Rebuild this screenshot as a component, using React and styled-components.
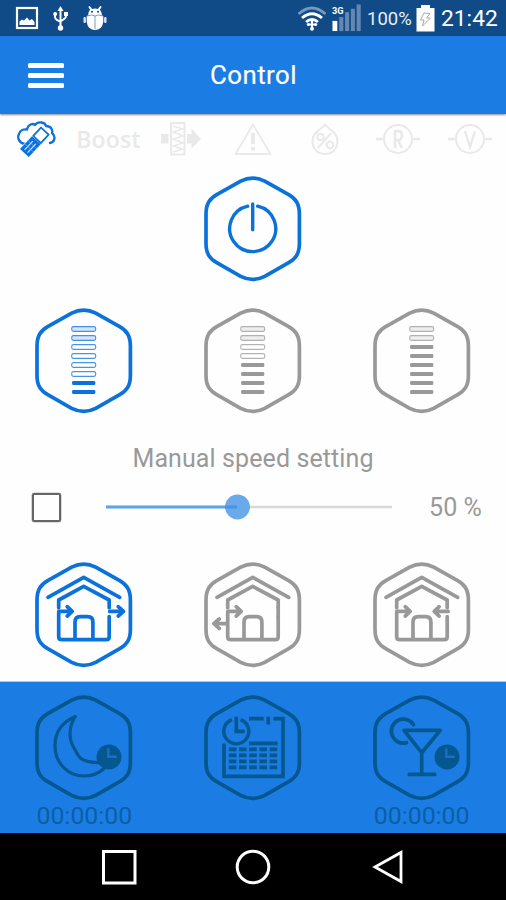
import React from 'react';
import styled, { createGlobalStyle } from 'styled-components';

const BLUE = '#0b72dc';
const GREY = '#999999';
const NAVY = '#04578f';
const PALE = '#e9e9e9';

const GlobalStyle = createGlobalStyle`
  * { box-sizing: border-box; }
  body { margin: 0; background: #fff; font-family: Roboto, "Liberation Sans", sans-serif; }
`;

const Screen = styled.div`
  width: 506px;
  height: 900px;
  display: flex;
  flex-direction: column;
  overflow: hidden;
  background: #fefefe;
`;

const StatusBar = styled.header`
  flex: none;
  height: 36px;
  padding: 0 9px 0 15px;
  display: flex;
  align-items: center;
  justify-content: space-between;
  background: #104b88;
  color: #fff;
`;

const StatusGroup = styled.div`
  display: flex;
  align-items: center;
  gap: ${(p) => p.$gap}px;
`;

const Percent = styled.span`
  width: 43px;
  font-size: 18.5px;
  line-height: 36px;
  padding-top: 2px;
  color: #e8eef6;
`;

const Clock = styled.span`
  width: 56px;
  font-size: 22.8px;
  line-height: 36px;
  padding-top: 2px;
  white-space: nowrap;
`;

const AppBar = styled.div`
  flex: none;
  height: 78px;
  display: grid;
  grid-template-columns: 1fr auto 1fr;
  align-items: center;
  background: #1b7de3;
  color: #fff;
  box-shadow: 0 1px 2px rgba(0, 0, 0, 0.45);
`;

const MenuButton = styled.button`
  width: 36px;
  margin: 0 0 0 28px;
  padding: 0;
  border: 0;
  background: none;
  display: flex;
  flex-direction: column;
  gap: 5px;
`;

const MenuLine = styled.span`
  height: 5px;
  border-radius: 1.5px;
  background: #fff;
`;

const Title = styled.h1`
  margin: 0;
  padding-left: 1px;
  font-size: 25.8px;
  font-weight: 400;
  letter-spacing: 0.45px;
  -webkit-text-stroke: 0.2px #fff;
`;

const Indicators = styled.div`
  flex: none;
  height: 50px;
  display: grid;
  grid-template-columns: repeat(7, 1fr);
  align-items: center;
  justify-items: center;
`;

const Boost = styled.span`
  font: 600 23px/30px "Open Sans", "Noto Sans", sans-serif;
  letter-spacing: 0.2px;
  color: ${PALE};
`;

const PowerRow = styled.div`
  flex: none;
  height: 132px;
  padding-top: 12px;
  display: flex;
  justify-content: center;
`;

const ButtonRow = styled.div`
  flex: none;
  height: ${(p) => p.$height}px;
  padding-top: ${(p) => p.$top}px;
  display: grid;
  grid-template-columns: repeat(3, 1fr);
  justify-items: center;
  align-items: start;
`;

const HexCell = styled.div`
  display: flex;
  flex-direction: column;
  align-items: center;
`;

const HexSvg = styled.svg`
  display: block;
  fill: none;
  stroke: ${(p) => p.$color};
  stroke-width: 3.7;
  stroke-linecap: round;
  stroke-linejoin: round;
`;

const SpeedSection = styled.section`
  flex: none;
  height: 122px;
  display: flex;
  flex-direction: column;
  color: ${GREY};
`;

const SpeedTitle = styled.h2`
  margin: 15px 0 0;
  font-size: 25px;
  line-height: 32px;
  font-weight: 400;
  letter-spacing: 0.1px;
  text-align: center;
`;

const SpeedRow = styled.div`
  height: 64px;
  padding: 0 24px 0 32px;
  display: flex;
  align-items: center;
`;

const Checkbox = styled.span`
  width: 29px;
  height: 29px;
  border: 2px solid #666;
  border-radius: 2px;
  box-shadow: 0 0 0.5px 0.3px #777;
`;

const SliderSvg = styled.svg`
  margin-left: 45px;
`;

const SpeedValue = styled.span`
  margin-left: auto;
  padding-top: 2px;
  font-size: 25px;
  line-height: 32px;
  letter-spacing: 0.1px;
`;

const TimerPanel = styled.section`
  flex: none;
  height: 152px;
  border-top: 1px solid #a9c9f3;
  background: #1b7de3;
`;

const TimerText = styled.span`
  font-size: 24.8px;
  line-height: 30px;
  color: #0a5fa6;
`;

const NavBar = styled.nav`
  flex: 1;
  display: flex;
  align-items: center;
  justify-content: center;
  gap: 98px;
  background: #000;
`;

const HEX =
  'M-46.7-14.5C-46.7-25-43-30-36-34L-12-47.6C-4.5-51.4 4.5-51.4 12-47.6L36-34C43-30 46.7-25 46.7-14.5V14.5C46.7 25 43 30 36 34L12 47.6C4.5 51.4-4.5 51.4-12 47.6L-36 34C-43 30-46.7 25-46.7 14.5Z';

function Hex({ color, children }) {
  return (
    <HexSvg width="100" height="106" viewBox="-49.7 -52.7 100 106" $color={color}>
      <path d={HEX} />
      {children}
    </HexSvg>
  );
}

function SpeedHex({ color, filled, tint }) {
  return (
    <Hex color={color}>
      {Array.from({ length: 8 }, (_, i) => {
        const y = -31.7 + i * 9;
        return i >= 8 - filled ? (
          <rect key={i} x="-11.6" y={y - 2} width="23.2" height="4" rx="1.3" fill={color} stroke="none" />
        ) : (
          <rect key={i} x="-12" y={y - 2.4} width="24" height="4.8" rx="1.8" fill={i < 2 ? tint : '#fff'} strokeWidth="1.1" strokeOpacity=".75" />
        );
      })}
    </Hex>
  );
}

function HouseHex({ color, variant }) {
  return (
    <Hex color={color}>
      <path d="M-35.7-17.3L0-37.3L36-17.3" />
      <path d="M-25-7V-14.7L0-28.3L25.5-14.7V-7M-25-2V22Q-25 25 -22 25H22.5Q25.5 25 25.5 22V2" />
      <path d="M-8.7 24V7.5Q-8.7 2 -3.5 2H4Q9.2 2 9.2 7.5V24" />
      <path d="M-25-3.3H-12M-16.5-8L-11.5-3.3L-16.5 1.4" />
      {variant === 'through' && <path d="M26-3.3H39M34.5-8L39.8-3.3L34.5 1.4" />}
      {variant === 'left' && <path d="M25.5-7V2M-26 9H-38M-33.5 4.3L-38.8 9L-33.5 13.7" />}
      {variant === 'in' && <path d="M26.5-3.3H13M17.5-8L12.5-3.3L17.5 1.4" />}
    </Hex>
  );
}

function MiniClock() {
  return (
    <g>
      <circle cx="25.3" cy="9.3" r="12.5" fill={NAVY} stroke="none" />
      <path d="M24.6 0.5V9H33" stroke="#1a70c4" strokeWidth="2.4" strokeLinecap="butt" strokeLinejoin="miter" />
    </g>
  );
}

function CalendarHex() {
  return (
    <Hex color={NAVY}>
      <g strokeLinecap="butt" strokeLinejoin="miter">
        <path d="M-12.1-28.1A12.5 12.5 0 1 1-20.7-28.1" strokeWidth="3.4" />
        <path d="M-16.4-31V-16.3H-8" />
        <path d="M-3.7-29H11M15.6-31V-23.2M20.6-29H30.3V28.7H-28.7V-4.3M-3.7-4.3H24.8" />
        {[1.7, 7.7, 13.7, 19.7].map((y) => (
          <path key={y} d={`M-23.9 ${y}H25`} strokeWidth="3.7" strokeDasharray="7.6 2.6" />
        ))}
      </g>
    </Hex>
  );
}

const CircleLetter = ({ children }) => (
  <svg width="46" height="34" viewBox="-23 -17 46 34" fill="none" stroke={PALE} strokeWidth="2">
    <circle r="14" />
    <path d="M-22 0H-14M14 0H22" strokeWidth="2.6" />
    {children}
  </svg>
);

function StatusIcons() {
  return (
    <StatusGroup $gap={14}>
      <svg width="24" height="24" viewBox="0 0 24 24">
        <rect x="2" y="2" width="20" height="20" fill="none" stroke="#fff" strokeWidth="2.2" />
        <path d="M4.5 19V15.5L7 13.5L9 14.5L12 11.5L14.5 14.5L17 13L19.5 16V19Z" fill="#fff" />
      </svg>
      <svg width="16" height="26" viewBox="0.5 0 16 26" fill="none" stroke="#fff" strokeWidth="2">
        <path d="M8 23V4M2.5 9V12Q2.5 14 4.5 15L8 17M13.5 9V11Q13.5 13 11.5 14L8 16.5" />
        <path d="M8 1L11 6H5Z" fill="#fff" stroke="none" />
        <circle cx="2.7" cy="9" r="2" fill="#fff" stroke="none" />
        <rect x="11.5" y="7" width="4" height="4" fill="#fff" stroke="none" />
        <circle cx="8" cy="23" r="2.7" fill="#fff" stroke="none" />
      </svg>
      <svg width="24" height="26" viewBox="0 0 24 26">
        <path d="M6.5 2L8.5 5M17.5 2L15.5 5" stroke="#fff" strokeWidth="2" strokeLinecap="round" />
        <path d="M5 10.5Q5 3.5 12 3.5T19 10.5Z" fill="#fff" />
        <path d="M3.7 11Q12 8 20.3 11V17Q19 25 12 25T3.7 17Z" fill="#fff" />
        <path d="M12 11V24M4 11Q9 9 12 11Q15 9 20 11" fill="none" stroke="#7d9bc1" strokeWidth="1" />
        <rect x="0.5" y="12" width="2.4" height="6" rx="1" fill="#dce5f0" />
        <rect x="21.1" y="12" width="2.4" height="6" rx="1" fill="#dce5f0" />
        <circle cx="9" cy="6.8" r="1" fill="#104b88" />
        <circle cx="15" cy="6.8" r="1" fill="#104b88" />
      </svg>
    </StatusGroup>
  );
}

function SignalIcons() {
  return (
    <StatusGroup $gap={6}>
      <svg width="30" height="26" viewBox="-1 -0.5 30 26" fill="none" strokeWidth="2.8">
        <path d="M1.5 8.5Q15-3.5 28.5 8.5" stroke="#7797bc" />
        <path d="M5 12.5Q15 4 25 12.5M9 16.5Q15 11.5 21 16.5" stroke="#fff" />
        <circle cx="11.3" cy="19" r="1.5" fill="#fff" />
        <circle cx="18.7" cy="19" r="1.5" fill="#fff" />
        <path d="M11 19H19M15 14V23" stroke="#fff" strokeWidth="2" />
        <circle cx="15" cy="23.3" r="2" fill="#fff" />
      </svg>
      <svg width="29" height="28" viewBox="-0.5 0 30 28">
        <text x="-0.5" y="9.5" fontFamily="Roboto, sans-serif" fontSize="9.5" fontWeight="700" fill="#fff">3G</text>
        <rect x="0" y="17" width="5" height="10.5" fill="#fff" />
        <g fill="#6488b2">
          <rect x="7" y="13" width="4.2" height="14.5" />
          <rect x="13" y="8" width="4.2" height="19.5" />
          <rect x="19" y="4.5" width="4.2" height="23" />
          <rect x="25" y="0" width="4.2" height="27.5" />
        </g>
      </svg>
      <Percent>100%</Percent>
      <svg width="19" height="28" viewBox="0 0 19 28">
        <path d="M5 1H14V4H18.5V27.5H0.5V4H5Z" fill="#fff" />
        <path d="M8 9L4.5 16H8L6.5 22L14.5 14H10.5L14 9.5Z" fill="none" stroke="#aaa" strokeWidth="1" />
      </svg>
      <Clock>21:42</Clock>
    </StatusGroup>
  );
}

export default function App() {
  return (
    <Screen>
      <GlobalStyle />
      <StatusBar>
        <StatusIcons />
        <SignalIcons />
      </StatusBar>
      <AppBar>
        <MenuButton aria-label="Menu">
          <MenuLine />
          <MenuLine />
          <MenuLine />
        </MenuButton>
        <Title>Control</Title>
      </AppBar>

      <Indicators>
        <svg width="40" height="38" viewBox="-20 -19 40 38" fill="none" stroke={BLUE} strokeWidth="2.3" strokeLinejoin="round" strokeLinecap="round">
          <path d="M-11 5C-17 4-19-1-17-5C-16-9-12-10-9-9.5C-8-15-3-16-1-14C2-18 9-17 10-13C15-13 17-9 16-6C20-3 19 3 14 4" />
          <g transform="translate(1 .5) rotate(43)">
            <path d="M-6.5-13H6.5V20H-6.5Z" fill="#fff" stroke="none" />
            <path d="M-5.2-11.5H5.2V0H-5.2Z" strokeWidth="1.8" />
            <path d="M-6 1H6V18.5H-6Z" fill={BLUE} stroke="none" />
            <path d="M-2 4V16M2 4V16" stroke="#dceafa" strokeWidth="1.1" strokeLinecap="butt" />
            <path d="M-6 7H6M-6 11.5H6" stroke="#7fb3ee" strokeWidth=".6" />
          </g>
        </svg>
        <Boost>Boost</Boost>
        <svg width="42" height="36" viewBox="-21 -18 42 36" fill="none" stroke={PALE}>
          <rect x="-20" y="-5" width="7.5" height="9.5" fill={PALE} stroke="none" />
          <path d="M-10-16H3.5V15.5H-10Z" strokeWidth="2" />
          <path d="M-8-13L2-10L-8-7L2-3L-8 0L2 4L-8 7L2 10L-8 13" strokeWidth="1.4" />
          <path d="M6-5H10.5V-10.5L20 0L10.5 9.5V4.5H6Z" fill={PALE} stroke="none" />
        </svg>
        <svg width="40" height="36" viewBox="-20 -18 40 36" fill="none" stroke={PALE} strokeWidth="1.8" strokeLinejoin="round">
          <path d="M0-14.5L17.5 15H-17.5Z" />
          <path d="M0-6V5M0 8V11.5" strokeWidth="4" />
        </svg>
        <svg width="30" height="36" viewBox="-15 -18 30 36" fill="none" stroke={PALE} strokeWidth="2">
          <path d="M0-14.5C3-10 12.5-7 12.5 2C12.5 10 7 15 0 15S-12.5 10-12.5 2C-12.5-7-3-10 0-14.5Z" />
          <circle cx="-4.5" cy="-2" r="3.2" />
          <circle cx="5" cy="6" r="3.4" />
          <path d="M6-6L-7 9" />
        </svg>
        <CircleLetter>
          <path d="M-3 9V-8H0Q4-8 4-3.5T0 1H-3M0 1L4 9" strokeWidth="2.6" />
        </CircleLetter>
        <CircleLetter>
          <path d="M-5-8L0 8L5-8" strokeWidth="2.3" />
        </CircleLetter>
      </Indicators>

      <PowerRow>
        <Hex color={BLUE}>
          <path d="M5-22.5A23 23 0 1 1-5-22.5M0-24.8V1" strokeWidth="3.4" />
        </Hex>
      </PowerRow>

      <ButtonRow $height={132} $top={12}>
        <SpeedHex color={BLUE} filled={2} tint="#d6e5fb" />
        <SpeedHex color={GREY} filled={4} tint="#eeeeee" />
        <SpeedHex color={GREY} filled={6} tint="#eeeeee" />
      </ButtonRow>

      <SpeedSection>
        <SpeedTitle>Manual speed setting</SpeedTitle>
        <SpeedRow>
          <Checkbox role="checkbox" aria-checked="false" />
          <SliderSvg width="286" height="28" viewBox="0 0 286 28">
            <path d="M0 14H286" stroke="#d8d8d8" strokeWidth="2.4" />
            <path d="M0 14H131" stroke="#5fa3e7" strokeWidth="3" />
            <circle cx="131.5" cy="14" r="12.5" fill="#6aa9ea" />
            <path d="M119 14H131" stroke="#4a95e3" strokeWidth="3" />
          </SliderSvg>
          <SpeedValue>50 %</SpeedValue>
        </SpeedRow>
      </SpeedSection>

      <ButtonRow $height={131} $top={12}>
        <HouseHex color={BLUE} variant="through" />
        <HouseHex color={GREY} variant="left" />
        <HouseHex color={GREY} variant="in" />
      </ButtonRow>

      <TimerPanel>
        <ButtonRow $height={151} $top={13}>
          <HexCell>
            <Hex color={NAVY}>
              <path d="M-8.7-31C-23-25-28.7-14-28.7-2C-28.7 16-15 28.3 0 28.3C8 28.3 14.5 26 20 21" strokeWidth="3.2" />
              <path d="M-8.7-31C-15-20-15.5-9-9 1.5C-4 10-4 14 14 15" strokeWidth="3.2" />
              <MiniClock />
            </Hex>
            <TimerText>00:00:00</TimerText>
          </HexCell>
          <CalendarHex />
          <HexCell>
            <Hex color={NAVY}>
              <path d="M-8.2-23A12 12 0 1 0-15.2-5" />
              <path d="M-17.7-17.3H18.5L0 5ZM0 5V26.7M-12.5 26.7H13" />
              <MiniClock />
            </Hex>
            <TimerText>00:00:00</TimerText>
          </HexCell>
        </ButtonRow>
      </TimerPanel>

      <NavBar>
        <svg width="36" height="36" viewBox="0 0 36 36" fill="none" stroke="#fff" strokeWidth="3">
          <rect x="2.5" y="2.5" width="31.5" height="31.5" />
        </svg>
        <svg width="36" height="36" viewBox="0 0 36 36" fill="none" stroke="#fff" strokeWidth="3">
          <circle cx="18" cy="18" r="15.8" />
        </svg>
        <svg width="36" height="36" viewBox="0 0 36 36" fill="none" stroke="#fff" strokeWidth="2.8">
          <path d="M32 3.5V32.5L6 18Z" />
        </svg>
      </NavBar>
    </Screen>
  );
}
